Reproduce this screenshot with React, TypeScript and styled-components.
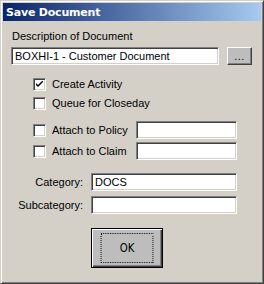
import React from "react";
import styled, { createGlobalStyle } from "styled-components";

const Global = createGlobalStyle`
  html, body { margin: 0; padding: 0; background: #d4d0c8; }
  * { box-sizing: border-box; }
`;

const Window = styled.div`
  width: 264px;
  height: 284px;
  background: #d4d0c8;
  border: 1px solid;
  border-color: #d4d0c8 #404040 #404040 #d4d0c8;
  box-shadow: inset 1px 1px #ffffff, inset -1px -1px #808080;
  padding: 2px;
  display: flex;
  flex-direction: column;
  font-family: "Liberation Sans", Arial, sans-serif;
  font-size: 11px;
  color: #000;
`;

const TitleBar = styled.div`
  height: 18px;
  background: linear-gradient(to right, #0a246a, #a6caf0);
  display: flex;
  align-items: center;
  padding-left: 3px;
`;

const Title = styled.span`
  color: #fff;
  font-family: "DejaVu Sans", Verdana, sans-serif;
  font-weight: bold;
  font-size: 11px;
  letter-spacing: -0.2px;
`;

const Body = styled.div`
  display: flex;
  flex-direction: column;
  padding-left: 8px;
`;

const FieldLabel = styled.div`
  line-height: 13px;
  height: 13px;
  margin-top: 9px;
  padding-left: 1px;
`;

const Row = styled.div<{ $mt: number; $pl?: number }>`
  display: flex;
  align-items: center;
  height: 18px;
  margin-top: ${(p) => p.$mt}px;
  padding-left: ${(p) => p.$pl ?? 0}px;
`;

const TextBox = styled.div<{ $w: number }>`
  width: ${(p) => p.$w}px;
  height: 18px;
  background: #fff;
  border: 1px solid;
  border-color: #808080 #ffffff #ffffff #808080;
  box-shadow: inset 1px 1px #404040, inset -1px -1px #d4d0c8;
  display: flex;
  align-items: center;
  padding-left: 3px;
  white-space: nowrap;
  overflow: hidden;
  line-height: 13px;
`;

const DotsButton = styled.div`
  width: 25px;
  height: 18px;
  margin-left: 8px;
  background: #bdbdbd;
  border: 1px solid;
  border-color: #ffffff #404040 #404040 #ffffff;
  box-shadow: inset -1px -1px #808080;
  display: flex;
  align-items: flex-end;
  justify-content: center;
  line-height: 11px;
  padding-bottom: 2px;
  letter-spacing: 0.5px;
`;

const Box = styled.div`
  width: 13px;
  height: 13px;
  flex: none;
  background: #fff;
  border: 1px solid;
  border-color: #808080 #ffffff #ffffff #808080;
  box-shadow: inset 1px 1px #404040, inset -1px -1px #d4d0c8;
  display: flex;
  align-items: center;
  justify-content: center;
`;

const CheckLabel = styled.span<{ $w?: number }>`
  margin-left: 6px;
  width: ${(p) => (p.$w ? `${p.$w}px` : "auto")};
  flex: none;
  line-height: 13px;
  white-space: nowrap;
`;

const SideLabel = styled.span`
  width: 72px;
  text-align: right;
  margin-right: 8px;
  line-height: 13px;
  white-space: nowrap;
`;

const ButtonRow = styled.div`
  display: flex;
  margin-top: 14px;
  padding-left: 80px;
`;

const OkButton = styled.div`
  width: 72px;
  height: 40px;
  border: 1px solid #000;
  background: #bdbdbd;
  box-shadow: inset 1px 1px #ffffff, inset -1px -1px #404040, inset -2px -2px #808080;
  padding: 4px;
  display: flex;
`;

const Focus = styled.div`
  flex: 1;
  border: 1px dotted #000;
  display: flex;
  align-items: center;
  justify-content: center;
  font-size: 12px;
  font-family: "DejaVu Sans", sans-serif;
  font-weight: normal;
  transform: scaleX(0.85);
`;

const Check = () => (
  <svg width="7" height="7" viewBox="0 0 7 7">
    <path d="M0 2 L0 4 L2 6 L7 1 L7 -1 L2 4 Z" fill="#000" />
  </svg>
);

const CheckBox = ({ checked }: { checked?: boolean }) => <Box>{checked ? <Check /> : null}</Box>;

export default function App() {
  return (
    <>
      <Global />
      <Window>
        <TitleBar>
          <Title>Save Document</Title>
        </TitleBar>
        <Body>
          <FieldLabel>Description of Document</FieldLabel>
          <Row $mt={4}>
            <TextBox $w={208}>BOXHI-1 - Customer Document</TextBox>
            <DotsButton>...</DotsButton>
          </Row>
          <Row $mt={10} $pl={22}>
            <CheckBox checked />
            <CheckLabel>Create Activity</CheckLabel>
          </Row>
          <Row $mt={1} $pl={22}>
            <CheckBox />
            <CheckLabel>Queue for Closeday</CheckLabel>
          </Row>
          <Row $mt={9} $pl={22}>
            <CheckBox />
            <CheckLabel $w={84}>Attach to Policy</CheckLabel>
            <TextBox $w={101} />
          </Row>
          <Row $mt={3} $pl={22}>
            <CheckBox />
            <CheckLabel $w={84}>Attach to Claim</CheckLabel>
            <TextBox $w={101} />
          </Row>
          <Row $mt={13}>
            <SideLabel>Category:</SideLabel>
            <TextBox $w={146}>DOCS</TextBox>
          </Row>
          <Row $mt={5}>
            <SideLabel>Subcategory:</SideLabel>
            <TextBox $w={146} />
          </Row>
          <ButtonRow>
            <OkButton>
              <Focus>OK</Focus>
            </OkButton>
          </ButtonRow>
        </Body>
      </Window>
    </>
  );
}
